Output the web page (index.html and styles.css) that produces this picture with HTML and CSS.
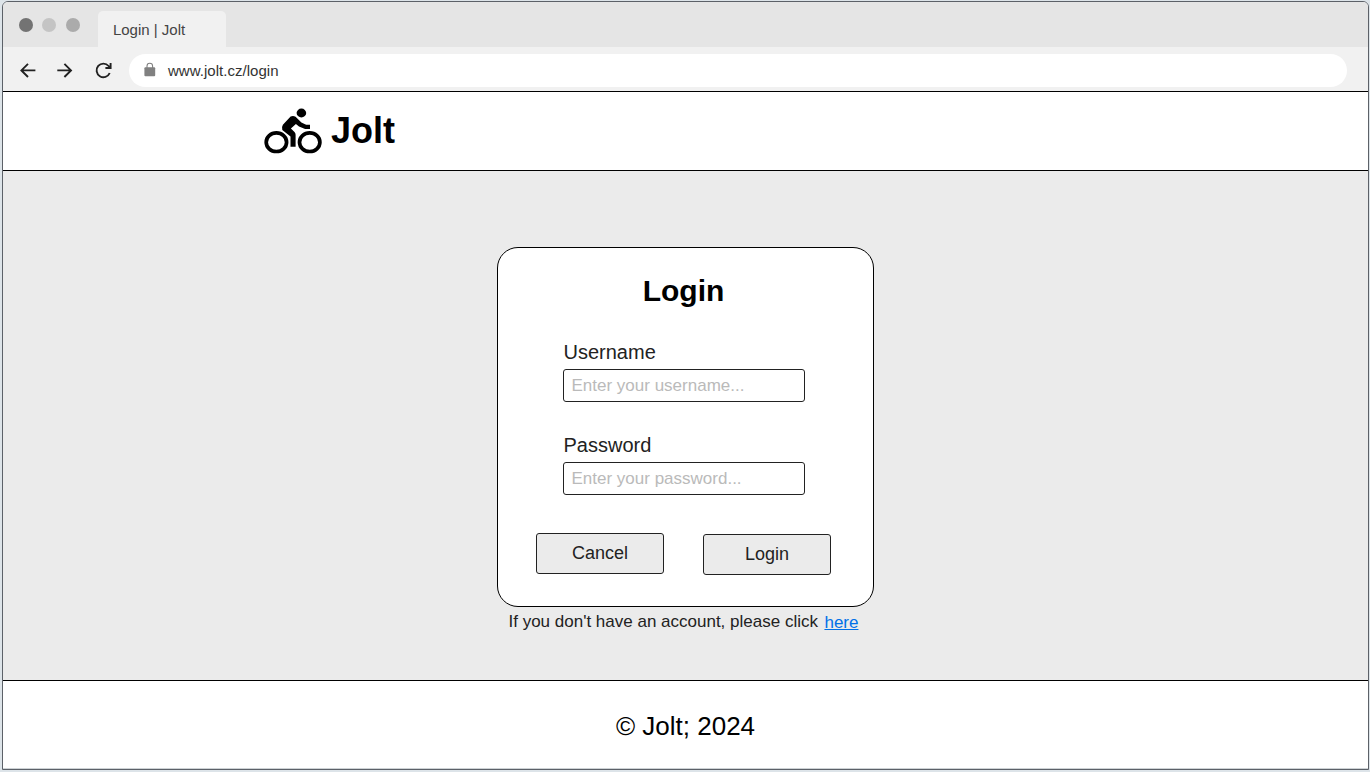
FILE: index.html
```html
<!DOCTYPE html>
<html lang="en">
<head>
<meta charset="utf-8">
<title>Login | Jolt</title>
<link rel="stylesheet" href="styles.css">
</head>
<body>
<div class="window">
  <div class="tabbar">
    <span class="dot dot-dark"></span><span class="dot dot-light"></span><span class="dot dot-mid"></span>
    <div class="tab">Login | Jolt</div>
  </div>
  <div class="toolbar">
    <svg class="nav" width="16" height="16" viewBox="0 0 16 16"><path d="M15.4 8.4H1.6M8 1.8L1.4 8.4L8 15"/></svg>
    <svg class="nav" width="16" height="16" viewBox="0 0 16 16"><path d="M0.3 8.4H14M7.4 1.8L14 8.4L7.4 15"/></svg>
    <svg class="nav reload" width="18" height="18" viewBox="0 0 18 18"><path d="M15.7 12A6.8 6.8 0 1 1 14.6 5L16 6.6M16.6 2V7H11.4"/></svg>
    <div class="address">
      <svg class="lock" width="12" height="15" viewBox="0 0 12 15"><path d="M3 6V4a2.8 2.8 0 0 1 5.6 0V6" fill="none" stroke="#808080" stroke-width="1.1"/><rect x="0.4" y="5.2" width="10.8" height="9" rx="1" fill="#808080"/></svg>
      <span>www.jolt.cz/login</span>
    </div>
  </div>
  <header class="header">
    <svg class="logo" width="58" height="46" viewBox="0 0 58 46">
      <g fill="none" stroke="#000" stroke-width="3.7"><ellipse cx="12.4" cy="34.2" rx="10.2" ry="9.3"/><ellipse cx="45.7" cy="34.2" rx="10.2" ry="9.3"/></g>
      <ellipse cx="37.4" cy="5" rx="4.8" ry="4.4"/>
      <path d="M26.6 8.6Q29 7.6 31.6 8.7L37.4 14.6L42.1 16.8H46V21H41.1L35 18.6L31.9 16L26.9 20.6L30.5 24Q31.6 25.3 31.6 26.8V38.8H26.5V28.6L18.3 22Q17.2 19.6 18.9 16.8Z"/>
    </svg>
    <span class="brand">Jolt</span>
  </header>
  <main class="main">
    <form class="card">
      <h1 class="title">Login</h1>
      <div class="fields">
        <label class="label" for="user">Username</label>
        <input class="input" id="user" type="text" placeholder="Enter your username...">
        <label class="label" for="pass">Password</label>
        <input class="input" id="pass" type="password" placeholder="Enter your password...">
      </div>
      <div class="actions">
        <button class="button" type="button">Cancel</button>
        <button class="button submit" type="button">Login</button>
      </div>
    </form>
    <p class="signup"><span>If you don't have an account, please click</span><a class="link" href="#">here</a></p>
  </main>
  <footer class="footer">© Jolt; 2024</footer>
</div>
</body>
</html>
```
FILE: styles.css
```css
* { box-sizing: border-box; }

body {
  margin: 0;
  height: 772px;
  padding: 1px 1px 2px 2px;
  overflow: hidden;
  background: #dde4e9;
  font-family: "Liberation Sans", Arial, sans-serif;
  color: #222;
}

.window {
  height: 769px;
  display: flex;
  flex-direction: column;
  overflow: hidden;
  border: 1px solid #5c6168;
  border-radius: 6px 6px 0 0;
  background: #fff;
}

.tabbar {
  height: 45px;
  display: flex;
  align-items: flex-end;
  padding-left: 15.5px;
  background: #e5e5e5;
}

.dot {
  width: 14px;
  height: 14px;
  margin: 0 9.7px 15px 0;
  border-radius: 50%;
}
.dot-dark { background: #737373; }
.dot-light { background: #c4c4c4; }
.dot-mid { background: #ababab; margin-right: 18px; }

.tab {
  width: 128px;
  height: 36px;
  padding-left: 15px;
  border-radius: 5px 5px 0 0;
  background: #f1f1f1;
  font-size: 15px;
  line-height: 38px;
  color: #444;
}

.toolbar {
  height: 44px;
  display: flex;
  align-items: center;
  padding: 2px 21px 0 17px;
  background: #f1f1f1;
}

.nav {
  margin-right: 21px;
  fill: none;
  stroke: #222;
  stroke-width: 1.9;
}
.reload { margin-right: 17px; }

.address {
  flex: 1;
  height: 33px;
  display: flex;
  align-items: center;
  gap: 12px;
  padding-left: 15px;
  border-radius: 17px;
  background: #fff;
  font-size: 15px;
  letter-spacing: 0.03px;
  color: #333;
}
.lock { margin-top: -1px; }

.header {
  height: 80px;
  display: flex;
  align-items: center;
  gap: 9px;
  padding-left: 261px;
  border-top: 1px solid #000;
  border-bottom: 1px solid #000;
}
.brand {
  font-size: 36px;
  font-weight: bold;
  line-height: 40px;
  color: #000;
}

.main {
  height: 509px;
  display: flex;
  flex-direction: column;
  align-items: flex-start;
  padding: 76px 0 0 494px;
  background: #ebebeb;
}

.card {
  width: 377px;
  height: 360px;
  border: 1px solid #000;
  border-radius: 21px;
  background: #fff;
}

.title {
  margin: 26px 4px 0 0;
  font-size: 30px;
  line-height: 34px;
  text-align: center;
  color: #000;
}

.fields {
  width: 242px;
  margin: 33px 0 0 65px;
}
.label {
  display: block;
  height: 28px;
  padding-left: 0.5px;
  font-size: 20px;
  line-height: 22px;
}
.input {
  display: block;
  width: 242px;
  height: 33px;
  margin: 0 0 32px;
  padding: 0 7.5px;
  border: 1px solid #222;
  border-radius: 3px;
  background: #fff;
  font: 17px "Liberation Sans", Arial, sans-serif;
}
.input::placeholder { color: #bababa; opacity: 1; }

.actions {
  display: flex;
  gap: 39px;
  margin: 38px 0 0 38px;
}
.button {
  width: 128px;
  height: 41px;
  padding: 0 0 1px;
  border: 1px solid #222;
  border-radius: 3px;
  background: #ebebeb;
  font: 18px "Liberation Sans", Arial, sans-serif;
  color: #222;
}
.submit { margin-top: 1px; }

.signup {
  display: flex;
  gap: 6px;
  margin: 5px 0 0 11.5px;
  font-size: 17px;
  line-height: 20px;
}
.link {
  margin: 1px 0 0 0.5px;
  color: #0070e8;
  text-decoration-thickness: 1px;
  text-underline-offset: 1px;
}

.footer {
  height: 89px;
  padding: 29px 0 0;
  border-top: 1px solid #000;
  border-bottom: 1px solid #cdd2d5;
  font-size: 26px;
  line-height: 32px;
  text-align: center;
  color: #000;
}
```
